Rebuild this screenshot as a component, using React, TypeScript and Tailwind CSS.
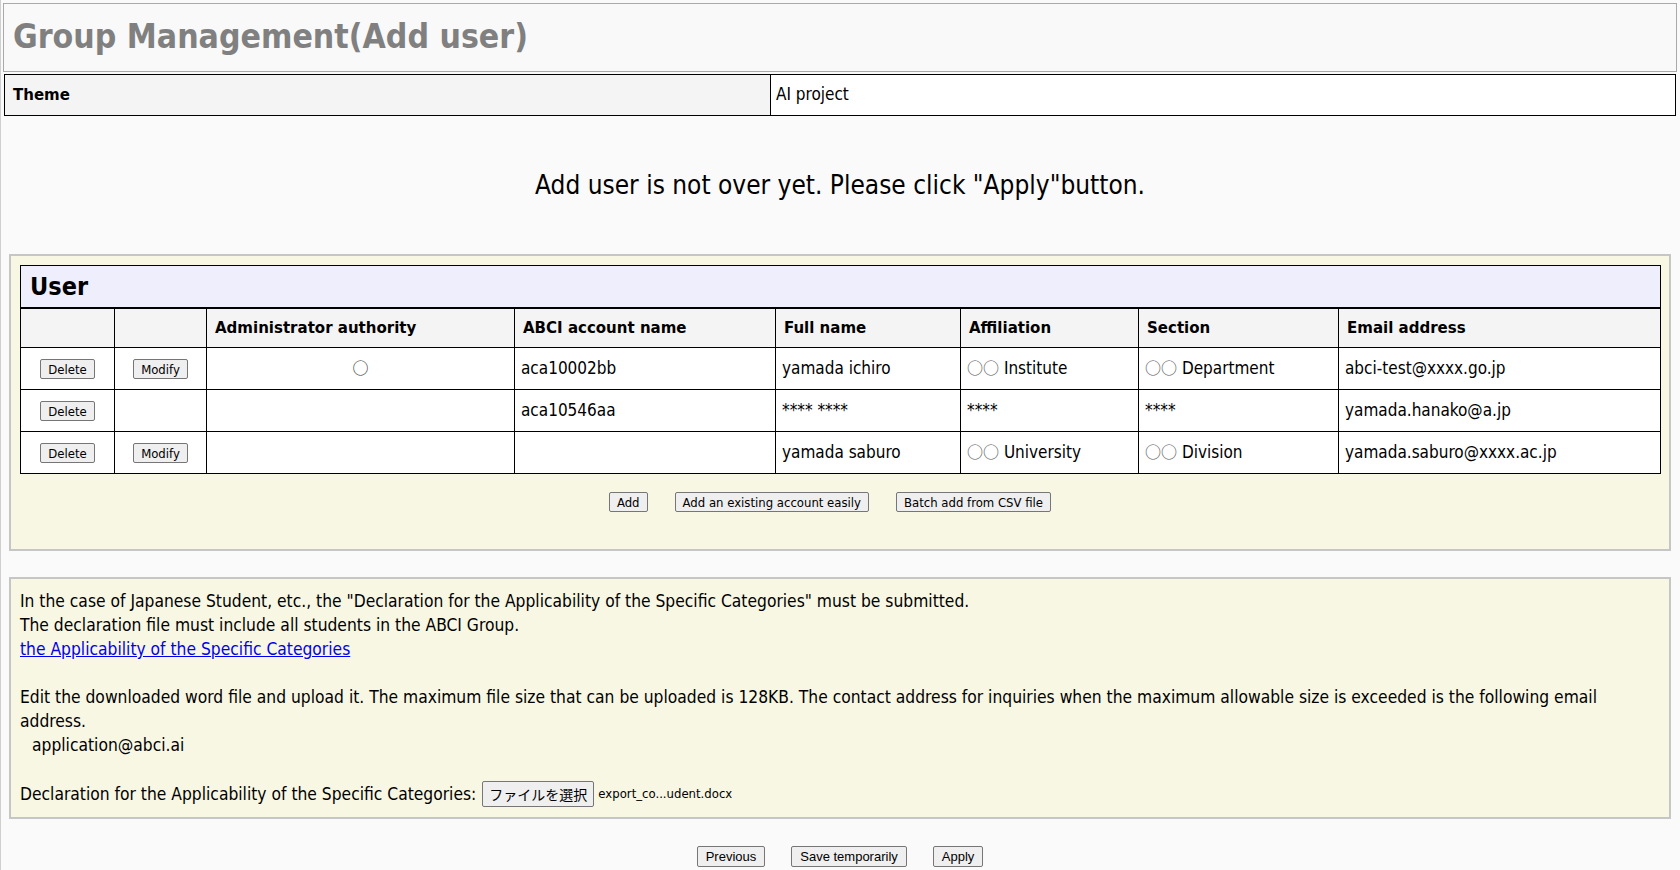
import React from "react";

type UserRow = {
  canModify: boolean;
  admin: boolean;
  account: string;
  name: string;
  affiliation: string;
  section: string;
  email: string;
};

const users: UserRow[] = [
  {
    canModify: true,
    admin: true,
    account: "aca10002bb",
    name: "yamada ichiro",
    affiliation: "Institute",
    section: "Department",
    email: "abci-test@xxxx.go.jp",
  },
  {
    canModify: false,
    admin: false,
    account: "aca10546aa",
    name: "**** ****",
    affiliation: "****",
    section: "****",
    email: "yamada.hanako@a.jp",
  },
  {
    canModify: true,
    admin: false,
    account: "",
    name: "yamada saburo",
    affiliation: "University",
    section: "Division",
    email: "yamada.saburo@xxxx.ac.jp",
  },
];

function Circles({ text }: { text: string }) {
  if (text === "****") return <>{text}</>;
  return (
    <>
      <span className="font-['Noto_Sans_CJK_JP',sans-serif] text-[16px] text-[#555]">○○</span> {text}
    </>
  );
}

function SmallButton({ children }: { children: React.ReactNode }) {
  return (
    <button className="h-[20px] px-[7px] text-[13px] leading-none text-black bg-[#efefef] border border-[#767676] rounded-[2px]">
      {children}
    </button>
  );
}

function PageButton({ children }: { children: React.ReactNode }) {
  return (
    <button className="h-[21px] px-[8px] text-[13px] leading-none text-black bg-[#efefef] border border-[#767676] rounded-[2px] font-['Liberation_Sans',Arial,sans-serif] font-stretch-normal">
      {children}
    </button>
  );
}

export default function App() {
  return (
    <div className="min-h-[870px] bg-[#fafafa] border-l border-[#cfcfcf] pl-[2px] pr-[3px] pt-[3px] font-['DejaVu_Sans_Condensed','DejaVu_Sans',sans-serif] font-stretch-condensed text-black">
      {/* title */}
      <div className="h-[69px] border border-[#a9a9a9] bg-[#f9f9f9] flex items-center px-[9px]">
        <h1 className="text-[33.5px] font-bold text-[#808080]">Group Management(Add user)</h1>
      </div>

      {/* theme */}
      <div className="mt-[2px] mx-[1px] flex h-[42px] border border-black bg-white">
        <div className="w-[766px] shrink-0 border-r border-black bg-[#f4f4f4] px-[8px] flex items-center text-[16.7px] font-bold">
          Theme
        </div>
        <div className="flex-1 px-[5px] flex items-center text-[17px]">AI project</div>
      </div>

      {/* notice */}
      <div className="h-[138px] flex items-center justify-center text-[26px]">
        Add user is not over yet. Please click "Apply"button.
      </div>

      {/* users */}
      <div className="mx-[6px] border-2 border-[#c6c6c6] bg-[#f8f7e4] px-[9px] pt-[9px] pb-[18px]">
        <table className="w-[1640px] table-fixed border-collapse border border-black text-[17px]">
          <colgroup>
            <col className="w-[94px]" />
            <col className="w-[92px]" />
            <col className="w-[308px]" />
            <col className="w-[261px]" />
            <col className="w-[185px]" />
            <col className="w-[178px]" />
            <col className="w-[200px]" />
            <col className="w-[322px]" />
          </colgroup>
          <thead>
            <tr className="h-[42px]">
              <th colSpan={8} className="border-b-2 border-black bg-[#eeeefc] px-[9px] text-left text-[25px] font-bold">
                User
              </th>
            </tr>
            <tr className="h-[40px] bg-[#f4f4f4] text-[16.7px]">
              <th className="border border-black" />
              <th className="border border-black" />
              <th className="border border-black px-[8px] text-left font-bold">Administrator authority</th>
              <th className="border border-black px-[8px] text-left font-bold">ABCI account name</th>
              <th className="border border-black px-[8px] text-left font-bold">Full name</th>
              <th className="border border-black px-[8px] text-left font-bold">Affiliation</th>
              <th className="border border-black px-[8px] text-left font-bold">Section</th>
              <th className="border border-black px-[8px] text-left font-bold">Email address</th>
            </tr>
          </thead>
          <tbody className="bg-white">
            {users.map((u, i) => (
              <tr key={i} className="h-[42px]">
                <td className="border border-black text-center">
                  <SmallButton>Delete</SmallButton>
                </td>
                <td className="border border-black text-center">
                  {u.canModify && <SmallButton>Modify</SmallButton>}
                </td>
                <td className="border border-black text-center">
                  {u.admin && (
                    <span className="font-['Noto_Sans_CJK_JP',sans-serif] text-[16px] text-[#333]">○</span>
                  )}
                </td>
                <td className="border border-black px-[6px]">{u.account}</td>
                <td className="border border-black px-[6px]">{u.name}</td>
                <td className="border border-black px-[6px]">
                  <Circles text={u.affiliation} />
                </td>
                <td className="border border-black px-[6px]">
                  <Circles text={u.section} />
                </td>
                <td className="border border-black px-[6px]">{u.email}</td>
              </tr>
            ))}
          </tbody>
        </table>
        <div className="mt-[18px] pr-[20px] flex justify-center gap-[27px]">
          <SmallButton>Add</SmallButton>
          <SmallButton>Add an existing account easily</SmallButton>
          <SmallButton>Batch add from CSV file</SmallButton>
        </div>
        <div className="h-[19px]" />
      </div>

      {/* declaration */}
      <div className="mt-[26px] mx-[6px] border-2 border-[#c6c6c6] bg-[#f8f7e4] px-[9px] py-[10px] text-[17.3px] leading-[24px]">
        <p>
          In the case of Japanese Student, etc., the "Declaration for the Applicability of the Specific Categories" must be
          submitted.
        </p>
        <p>The declaration file must include all students in the ABCI Group.</p>
        <p>
          <a href="#" className="text-[#0000ee] underline">
            the Applicability of the Specific Categories
          </a>
        </p>
        <p className="h-[24px]" />
        <p>
          Edit the downloaded word file and upload it. The maximum file size that can be uploaded is 128KB. The contact
          address for inquiries when the maximum allowable size is exceeded is the following email address.
        </p>
        <p className="pl-[12px]">application@abci.ai</p>
        <p className="h-[24px]" />
        <div className="flex items-center h-[26px]">
          <span>Declaration for the Applicability of the Specific Categories:</span>
          <button className="ml-[6px] h-[26px] px-[6px] text-[14px] leading-none bg-[#efefef] border border-[#767676] rounded-[2px] font-['Noto_Sans_CJK_JP',sans-serif]">
            ファイルを選択
          </button>
          <span className="ml-[4px] text-[13px]">export_co...udent.docx</span>
        </div>
      </div>

      {/* actions */}
      <div className="mt-[27px] flex justify-center gap-[26px]">
        <PageButton>Previous</PageButton>
        <PageButton>Save temporarily</PageButton>
        <PageButton>Apply</PageButton>
      </div>
    </div>
  );
}
